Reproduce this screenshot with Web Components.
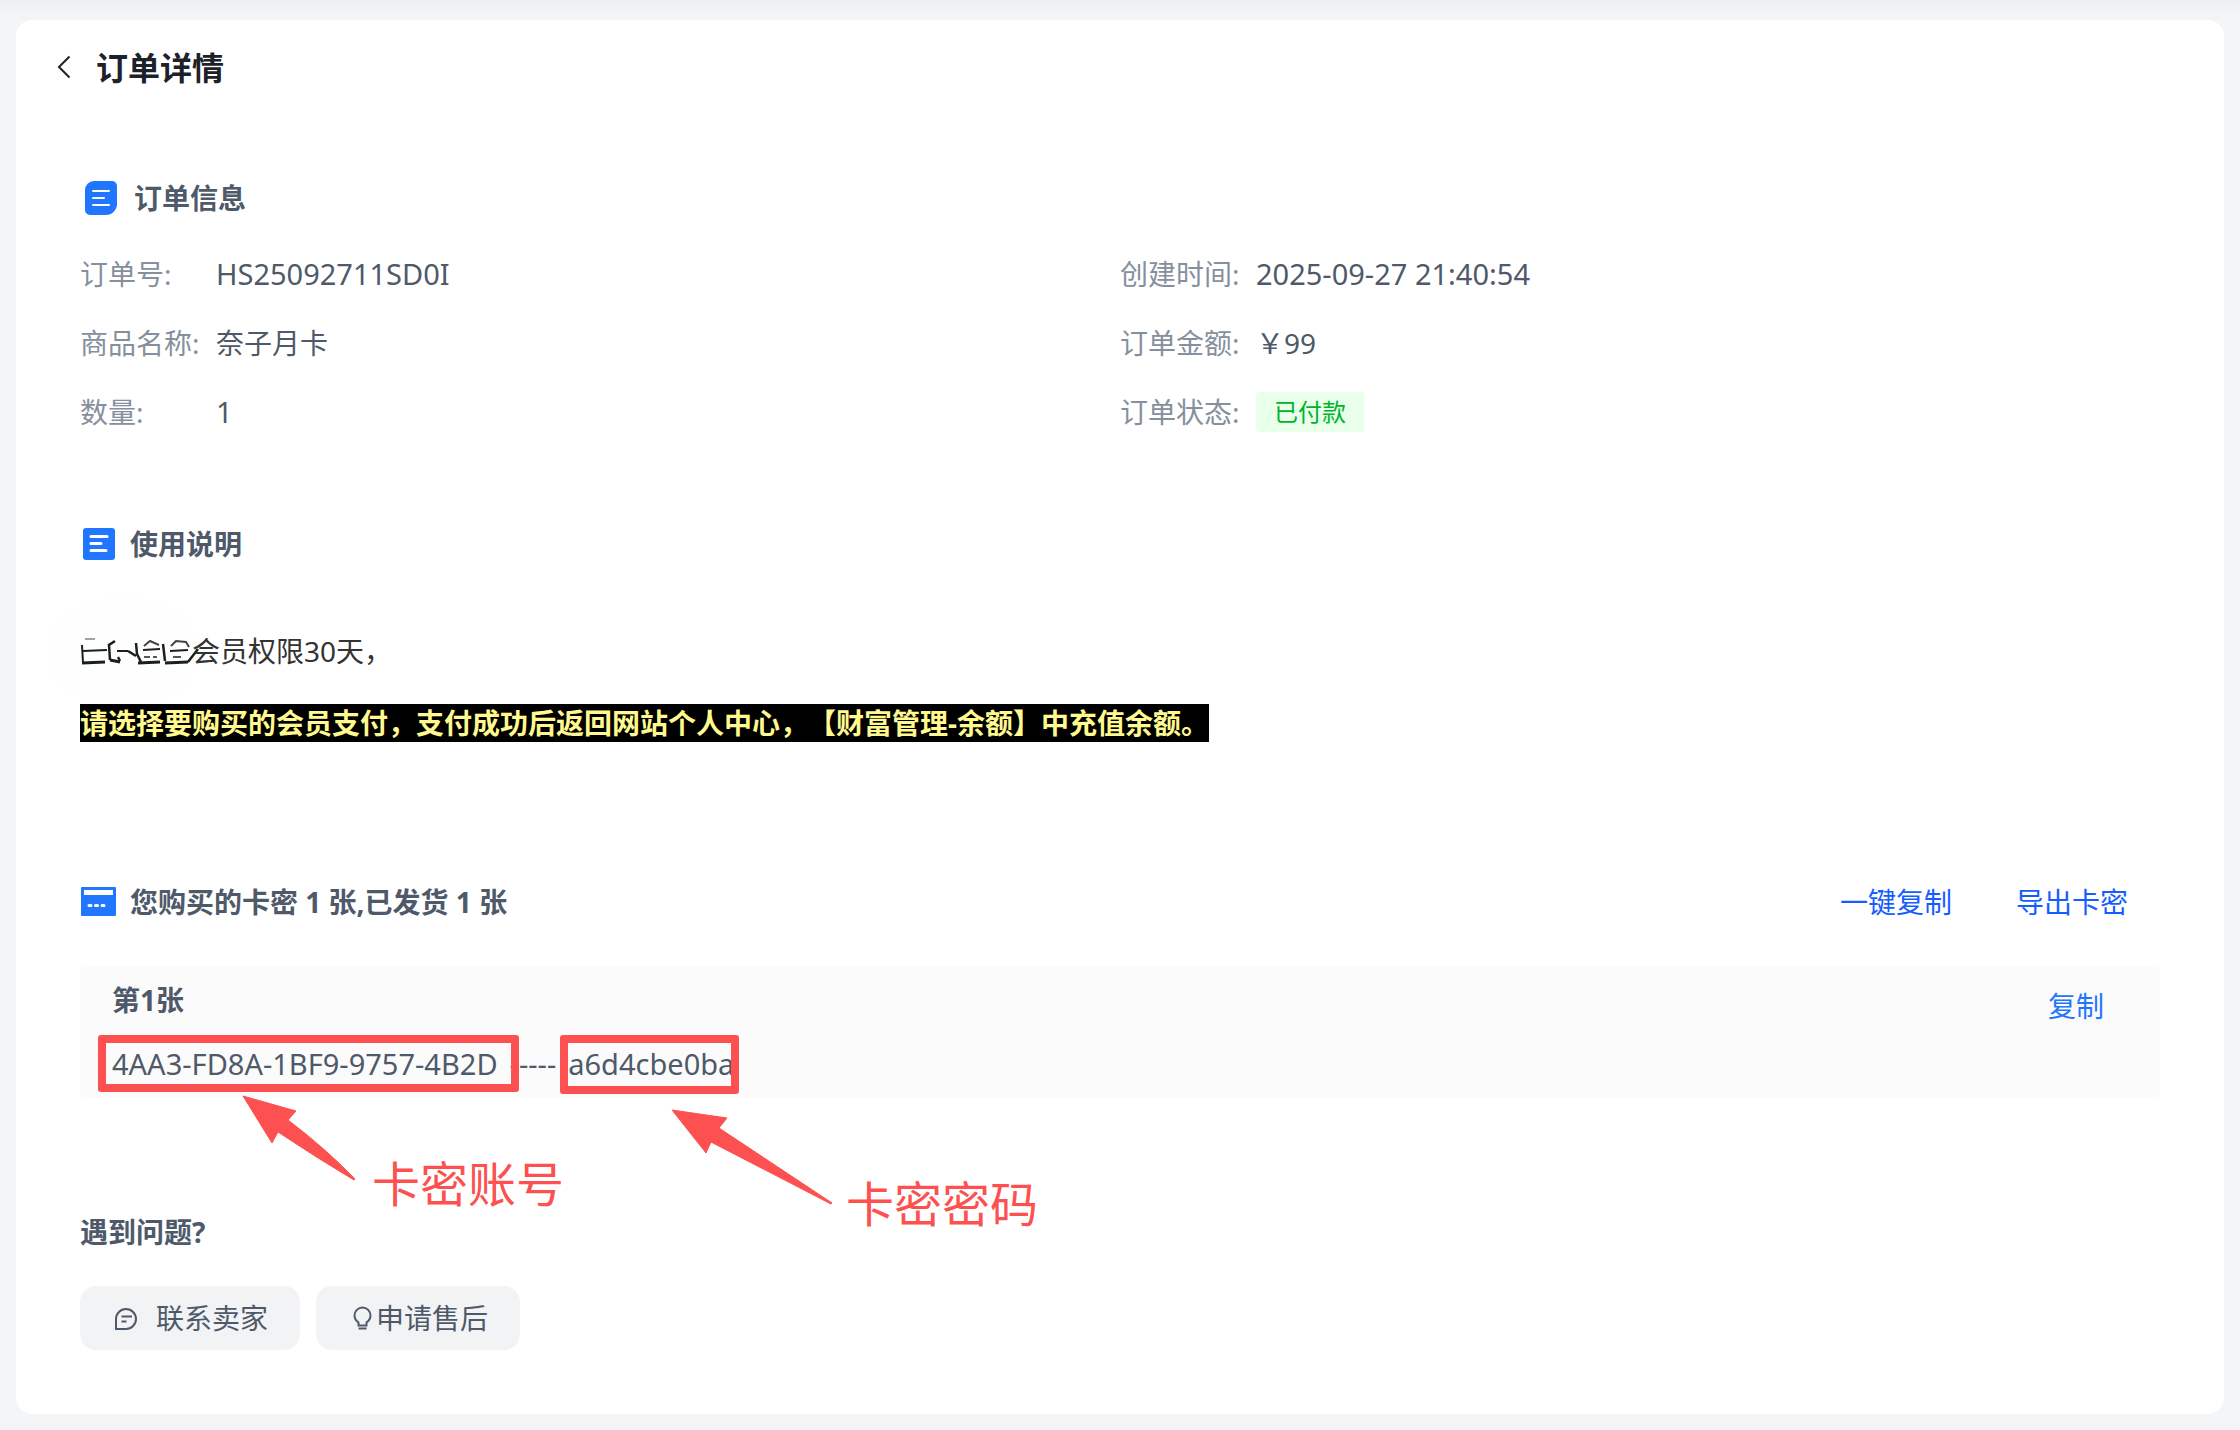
<!DOCTYPE html>
<html lang="zh-CN">
<head>
<meta charset="UTF-8">
<meta name="viewport" content="width=device-width, initial-scale=1">
<title>订单详情</title>
<style>
    body{
        margin:0;
        background:linear-gradient(#eff0f2, #f4f5f7 20px) #f4f5f7;
        font-family:"Noto Sans", "Noto Sans CJK SC", sans-serif;
        font-size:28px;
        line-height:44px;
        color:#4e5969;
        text-spacing-trim:space-all;
    }
</style>
</head>
<body>
<order-page>
    <page-title slot="titulo">订单详情</page-title>

    <order-section>
        <svg slot="icon" width="40" height="40" viewBox="0 0 40 40" aria-hidden="true">
            <path fill="#2176ff" d="M14 3h18a5 5 0 0 1 5 5v18a11 11 0 0 1-11 11H10a5 5 0 0 1-5-5V12a9 9 0 0 1 9-9z"/>
            <path stroke="#fff" stroke-width="2" stroke-linecap="round" d="M13 13h16M13 20h11M13 27h16"/>
        </svg>
        <span slot="title">订单信息</span>
        <info-grid>
            <info-item label="订单号:">HS25092711SD0I</info-item>
            <info-item label="创建时间:">2025-09-27 21:40:54</info-item>
            <info-item class="chinese" label="商品名称:">奈子月卡</info-item>
            <info-item class="chinese" label="订单金额:">￥99</info-item>
            <info-item label="数量:">1</info-item>
            <info-item label="订单状态:"><status-tag>已付款</status-tag></info-item>
        </info-grid>
    </order-section>

    <order-section>
        <svg slot="icon" width="36" height="36" viewBox="0 0 36 36" aria-hidden="true">
            <rect x="3" y="2" width="32" height="32" rx="3" fill="#2176ff"/>
            <path stroke="#fff" stroke-width="3" stroke-linecap="round" d="M11 10.500h16M11 17.500h10M11 24.500h15"/>
        </svg>
        <span slot="title">使用说明</span>
        <usage-text>
            <span slot="intro">会员权限30天，</span>
            <span slot="notice">请选择要购买的会员支付，支付成功后返回网站个人中心，【财富管理-余额】中充值余额。</span>
        </usage-text>
    </order-section>

    <order-section class="keys">
        <svg slot="icon" width="36" height="36" viewBox="0 0 36 36" aria-hidden="true">
            <rect x="1" y="3" width="35" height="29" rx="1" fill="#2176ff"/>
            <path fill="#fff" d="M4 6h29v5H4z"/>
            <path stroke="#fff" stroke-width="3" stroke-linecap="round" d="M9 21.500h2M15.500 21.500h2M22 21.500h2"/>
        </svg>
        <span slot="title">您购买的卡密 1 张,已发货 1 张</span>
        <text-button slot="actions">一键复制</text-button>
        <text-button slot="actions">导出卡密</text-button>
        <card-key name="第1张" account="4AA3-FD8A-1BF9-9757-4B2D" password="a6d4cbe0ba">
            <span slot="account">卡密账号</span>
            <span slot="password">卡密密码</span>
        </card-key>
    </order-section>

    <help-box>
        <span slot="title">遇到问题?</span>
        <help-button class="spaced">
            <svg slot="icon" width="28" height="28" viewBox="0 0 28 28" fill="none" stroke="#4e5969" stroke-width="2" aria-hidden="true">
                <path d="M4 25V15a10 10 0 1 1 10 10z"/>
                <path d="M9.500 12.500h10.500M9.500 17.500h5"/>
            </svg>
            联系卖家
        </help-button>
        <help-button>
            <svg slot="icon" width="28" height="28" viewBox="0 0 28 28" fill="none" stroke="#4e5969" stroke-width="2" aria-hidden="true">
                <path d="M10.500 21.500v-3C7 16 6.500 13.500 6.500 11.500a8 8 0 0 1 16 0c0 2-.5 4.500-4 7v3z"/>
                <path d="M10.500 24.500h8"/>
            </svg>
            申请售后
        </help-button>
    </help-box>
</order-page>

<script>
function criar(nome, html) {
    const modelo = document.createElement('template');
    modelo.innerHTML = html;

    window.customElements.define(nome, class extends HTMLElement {
        constructor() {
            super();
            this.attachShadow({ mode: 'open' });
            this.shadowRoot.appendChild(modelo.content.cloneNode(true));
        }

        // copies attributes into the elements marked with data-attr
        connectedCallback() {
            this.shadowRoot.querySelectorAll('[data-attr]').forEach((el) => {
                el.textContent = this.getAttribute(el.dataset.attr);
            });
        }
    });
}

criar('order-page', `
    <style>
        :host{display:block;padding:20px 16px 16px}
        main{background:#fff;border-radius:16px;padding-bottom:64px}
        .content{padding:60px 64px 0}
    </style>
    <main>
        <slot name="titulo"></slot>
        <div class="content"><slot></slot></div>
    </main>
`);

criar('page-title', `
    <style>
        :host{display:block;padding:24px 32px}
        header{display:flex;align-items:center;gap:16px;height:48px}
        button{display:flex;border:0;padding:0;background:none;cursor:pointer}
        h1{margin:0;font-size:32px;line-height:48px;color:#1d2129}
    </style>
    <header>
        <button type="button" aria-label="返回">
            <svg width="32" height="32" viewBox="0 0 32 32" fill="none" stroke="#1d2129" stroke-width="2">
                <path d="M21.500 4.500 11 15l10.500 10.500"/>
            </svg>
        </button>
        <h1><slot></slot></h1>
    </header>
`);

criar('order-section', `
    <style>
        :host{display:block;margin-bottom:88px}
        :host(.keys){margin-top:136px;margin-bottom:112px}
        .head{display:flex;align-items:center;justify-content:space-between;height:44px}
        h2{display:flex;align-items:center;gap:14px;margin:0;font-size:28px}
        .actions{display:flex}
    </style>
    <section>
        <div class="head">
            <h2><slot name="icon"></slot><slot name="title"></slot></h2>
            <div class="actions"><slot name="actions"></slot></div>
        </div>
        <slot></slot>
    </section>
`);

criar('info-grid', `
    <style>
        :host{display:grid;grid-template-columns:1fr 1fr;row-gap:25px;padding-top:32px}
    </style>
    <slot></slot>
`);

criar('info-item', `
    <style>
        :host{display:flex;align-items:center;height:44px;font-size:29px}
        :host(.chinese){font-size:28px}
        .label{width:136px;font-size:28px;color:#86909c}
    </style>
    <span class="label" data-attr="label"></span>
    <slot></slot>
`);

criar('status-tag', `
    <style>
        :host{
            display:block;
            padding:0 18px;
            border-radius:4px;
            background:#e8ffea;
            color:#00b42a;
            font-size:24px;
            line-height:40px;
        }
    </style>
    <slot></slot>
`);

criar('usage-text', `
    <style>
        :host{display:block;padding-top:64px;color:#333}
        p{margin:0 0 30px;line-height:42px}
        p:last-child{margin:0}
        svg{vertical-align:-5px;overflow:visible}
        mark{background:#000;color:#fff98f;font-weight:bold}
    </style>
    <p><svg width="112" height="30" viewBox="0 0 112 30" fill="none" stroke="#18211f" aria-hidden="true">
        <ellipse cx="43" cy="15" rx="76" ry="55" fill="#fefefe" stroke="none"/>
        <path stroke="#8a8088" stroke-width="1.500" d="M5 2h10"/>
        <path stroke-width="2" d="M2 8 3 26M3 14l24-1M37 14l11 0M63 13l17-1M90 14l18-1"/>
        <path stroke-width="3" d="M2 26 25 25M30 23l10 2M58 26l22-1M85 26l23-1"/>
        <path stroke-width="2.500" d="M35 4l-6 4 1 15M38 20l2 4M48 14l8 5M56 6l1 11 4 8M83 7l2 17M108 25l10-13"/>
        <path stroke="#444" stroke-width="2" d="M64 9l6-5 9 4M91 9l5-5 10 1 3 5"/>
        <path stroke="#555" stroke-width="2" d="M64 20h6M73 20h4M93 20h8"/>
    </svg><slot name="intro"></slot></p>
    <p><mark><slot name="notice"></slot></mark></p>
`);

criar('text-button', `
    <style>
        :host{display:block}
        button{border:0;padding:0 32px;background:none;color:#165dff;font:inherit;cursor:pointer}
    </style>
    <button type="button"><slot></slot></button>
`);

criar('card-key', `
    <style>
        :host{
            display:flex;
            justify-content:space-between;
            position:relative;
            margin-top:42px;
            padding:12px 24px 12px 32px;
            border-radius:8px;
            background:#fbfbfb;
        }
        h3{margin:0 0 20px;font-size:28px;line-height:44px}
        .code{display:flex;gap:12px;font-size:29px}
        button{align-self:flex-start;height:56px;border:0;padding:0 32px;background:none;color:#2176ff;font:inherit;cursor:pointer}

        /* red marks drawn over the key */
        .frame{position:absolute;box-sizing:border-box;border:8px solid #fc5150;border-radius:3px}
        .frame.one{left:18px;top:69px;width:421px;height:57px}
        .frame.two{left:480px;top:69px;width:179px;height:59px}
        .arrows{position:absolute;left:0;top:0;overflow:visible;pointer-events:none}
        .note{position:absolute;color:#fc5150;font-size:48px;line-height:64px;white-space:nowrap}
        .note.one{left:292px;top:186px}
        .note.two{left:766px;top:206px}
    </style>
    <div>
        <h3 data-attr="name"></h3>
        <div class="code"><span data-attr="account"></span><span>-----</span><span data-attr="password"></span></div>
    </div>
    <button type="button">复制</button>
    <div class="frame one"></div>
    <div class="frame two"></div>
    <svg class="arrows" width="800" height="260" viewBox="0 0 800 260" fill="#fc5150" stroke="#fc5150" stroke-linejoin="round" aria-hidden="true">
        <path d="M163 130 216 145 208 154Q245 182 275 213L274 214Q237 192 198 166L192 177z"/>
        <path d="M592 144 647 152 639 162 752 237 751 238 631 176 626 187z"/>
    </svg>
    <div class="note one"><slot name="account"></slot></div>
    <div class="note two"><slot name="password"></slot></div>
`);

criar('help-box', `
    <style>
        :host{display:block}
        h2{margin:0 0 32px;font-size:28px}
        .buttons{display:flex;gap:16px}
    </style>
    <h2><slot name="title"></slot></h2>
    <div class="buttons"><slot></slot></div>
`);

criar('help-button', `
    <style>
        :host{display:block}
        button{
            display:flex;
            align-items:center;
            height:64px;
            padding:0 32px;
            border:0;
            border-radius:16px;
            background:#f2f3f5;
            color:#4e5969;
            font:inherit;
            cursor:pointer;
        }
        :host(.spaced) button{gap:16px}
    </style>
    <button type="button"><slot name="icon"></slot><span><slot></slot></span></button>
`);
</script>
</body>
</html>
